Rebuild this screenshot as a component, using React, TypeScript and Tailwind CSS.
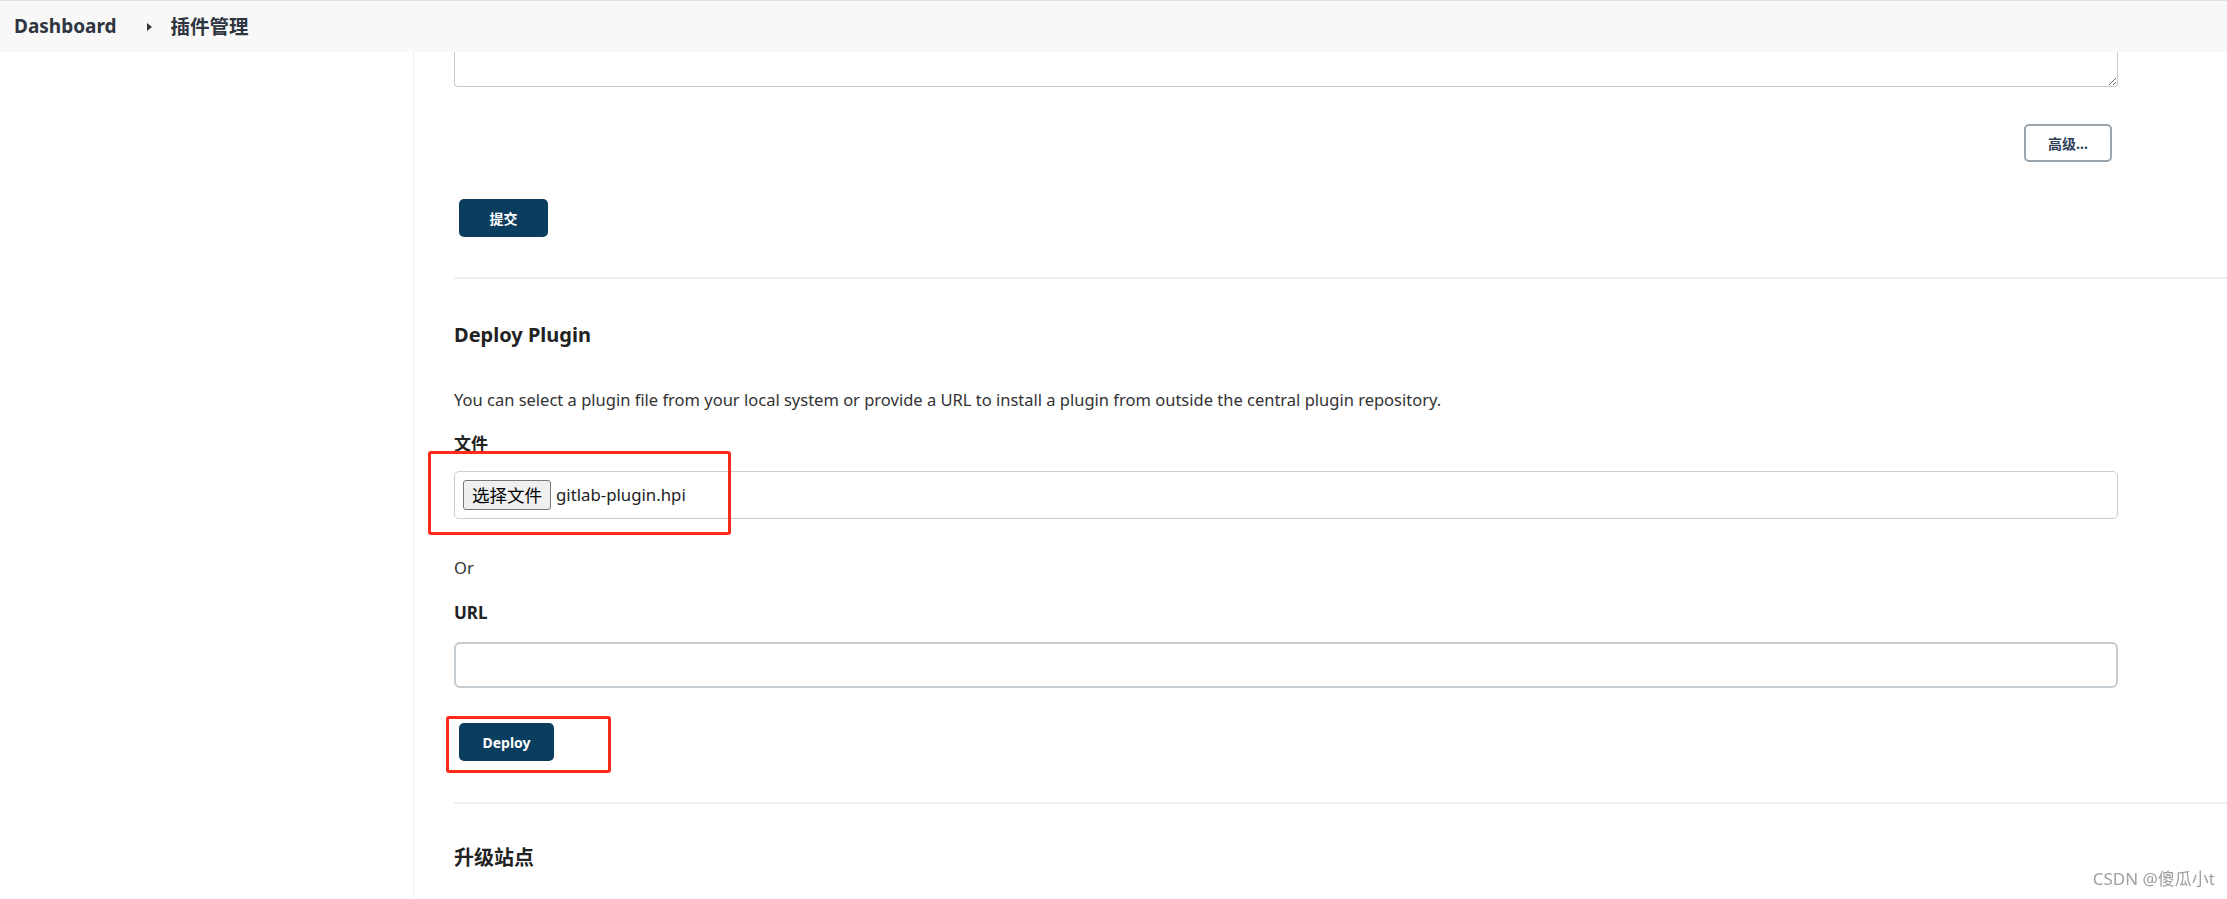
import React from "react";

const font = { fontFamily: '"Noto Sans", "Noto Sans CJK SC", sans-serif' };

const Separator = () => <div className="h-[2px] bg-[#f0f0f0]" />;

const PrimaryButton = ({ children, w }: { children: React.ReactNode; w: string }) => (
  <button
    className={`${w} h-[38px] rounded-[5px] bg-[#0b3d5e] text-white text-[14px] font-bold`}
  >
    {children}
  </button>
);

export default function App() {
  return (
    <div
      className="h-[899px] w-[2227px] overflow-hidden bg-white text-[#333]"
      style={font}
    >
      {/* BREADCRUMB */}
      <header className="h-[52px] border-t border-[#e3e3e3] bg-[#f8f8f8] flex items-center pl-[14px]">
        <span className="text-[19px] font-bold text-[#2f3540]">Dashboard</span>
        <span className="ml-[30px] mr-[19px] w-0 h-0 border-y-[4px] border-y-transparent border-l-[5px] border-l-[#333]" />
        <span className="text-[19.5px] font-bold text-[#2f3540]">插件管理</span>
      </header>

      <div className="flex h-[847px]">
        {/* SIDEBAR */}
        <aside className="w-[414px] shrink-0 border-r border-[#eeeeee]" />

        {/* MAIN */}
        <main className="relative flex-1 pl-[40px]">
          <div className="mr-[109px]">
            <textarea
              className="block w-full h-[35px] border border-t-0 border-[#c6ccd1] rounded-b-[4px] outline-none resize-y"
              readOnly
            />
            <div className="flex justify-end pt-[37px] pr-[6px]">
              <button className="w-[88px] h-[38px] rounded-[5px] border-2 border-[#9aa5ae] bg-white text-[14px] text-[#2f3f5a] font-bold">
                高级...
              </button>
            </div>
            <div className="pt-[37px] pl-[5px]">
              <PrimaryButton w="w-[89px]">提交</PrimaryButton>
            </div>
          </div>

          <div className="mt-[40px]">
            <Separator />
          </div>

          <div className="mr-[109px]">
            <h2 className="mt-[42px] text-[20px] leading-[28px] font-bold text-[#222]">
              Deploy Plugin
            </h2>
            <p className="mt-[39px] text-[16.5px] leading-[24px] text-[#333]">
              You can select a plugin file from your local system or provide a URL to install a plugin from outside the central plugin repository.
            </p>
            <div className="mt-[20px] text-[17px] leading-[24px] font-bold text-[#222]">
              文件
            </div>
            <div className="mt-[15px] h-[48px] border border-[#c9ced3] rounded-[5px] flex items-center pl-[8px]">
              <span className="h-[30px] px-[8px] flex items-center border border-[#767676] rounded-[3px] bg-[#efefef] text-[17.5px] text-black">
                选择文件
              </span>
              <span className="ml-[5px] text-[16.8px] text-[#222]">gitlab-plugin.hpi</span>
            </div>
            <div className="mt-[37px] text-[16.5px] leading-[24px] text-[#333]">Or</div>
            <div className="mt-[21px] text-[17px] leading-[24px] font-bold text-[#222]">
              URL
            </div>
            <div className="mt-[17px] h-[46px] border-2 border-[#c5ccd1] rounded-[6px]" />
            <div className="pt-[35px] pl-[5px]">
              <PrimaryButton w="w-[95px]">Deploy</PrimaryButton>
            </div>
          </div>

          <div className="mt-[41px]">
            <Separator />
          </div>

          <h2 className="mt-[40px] text-[20px] leading-[28px] font-bold text-[#222]">
            升级站点
          </h2>

          {/* ANNOTATIONS */}
          <div className="absolute left-[14px] top-[399px] w-[303px] h-[84px] border-[3px] border-[#ff2a1a] rounded-[3px]" />
          <div className="absolute left-[32px] top-[664px] w-[165px] h-[57px] border-[3px] border-[#ff2a1a] rounded-[3px]" />
        </main>
      </div>

      {/* WATERMARK */}
      <div
        className="fixed right-[12px] bottom-[8px] text-[17px] text-[#a0a0a0]"
        style={{ textShadow: "0 0 1px #fff" }}
      >
        CSDN @傻瓜小t
      </div>
    </div>
  );
}
